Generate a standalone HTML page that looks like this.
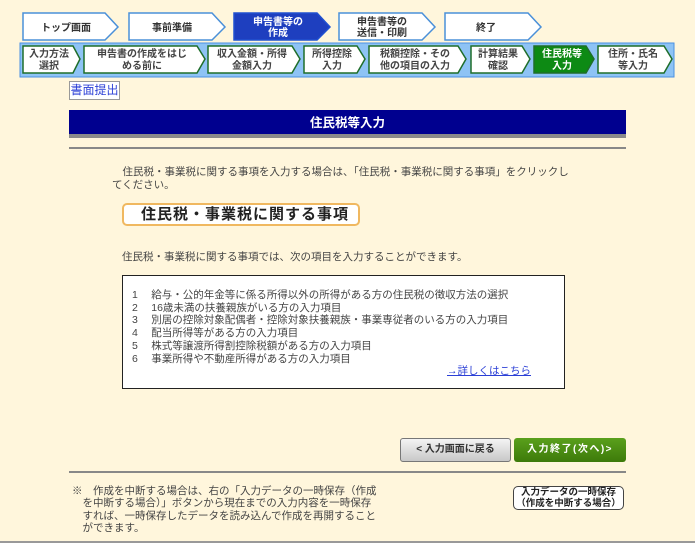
<!DOCTYPE html>
<html><head><meta charset="utf-8"><style>
*{margin:0;padding:0;box-sizing:border-box}
body{width:695px;height:543px;background:#fff6dc;font-family:"Liberation Sans","Noto Sans CJK JP",sans-serif;position:relative;overflow:hidden;color:#333}
.a{position:absolute}
svg text{font-family:"Liberation Sans","Noto Sans CJK JP",sans-serif}
.t{font-size:10.5px;color:#444;line-height:12.5px;white-space:nowrap}
</style></head><body>
<svg class="a" style="left:0;top:0" width="695" height="80">
<g stroke="#4a90d9" stroke-width="1.5" fill="#fff">
<polygon points="23,13 105,13 118,27 105,40 23,40"/>
<polygon points="129,13 212,13 225,27 212,40 129,40"/>
<polygon points="234,13 317,13 330,27 317,40 234,40" fill="#1e3fbf" stroke="#2050d0"/>
<polygon points="339,13 422,13 435,27 422,40 339,40"/>
<polygon points="445,13 528,13 541,27 528,40 445,40"/>
</g>
<g font-size="10" font-weight="bold" text-anchor="middle" fill="#333">
<text x="66" y="31">トップ画面</text>
<text x="172" y="31">事前準備</text>
<text x="278" y="25" fill="#fff">申告書等の</text><text x="278" y="36" fill="#fff">作成</text>
<text x="382" y="25">申告書等の</text><text x="382" y="36">送信・印刷</text>
<text x="486" y="31">終了</text>
</g>
<rect x="20" y="43" width="654" height="34" fill="#8ec3f5" stroke="#4a90e2"/>
<g stroke="#1f6e2a" stroke-width="1.5" fill="#fff">
<polygon points="23,46 73,46 80,59 73,73 23,73"/>
<polygon points="84,46 197,46 205,59 197,73 84,73"/>
<polygon points="208,46 292,46 300,59 292,73 208,73"/>
<polygon points="304,46 357,46 365,59 357,73 304,73"/>
<polygon points="369,46 458,46 466,59 458,73 369,73"/>
<polygon points="471,46 522,46 530,59 522,73 471,73"/>
<polygon points="534,46 586,46 594,59 586,73 534,73" fill="#0d8a14"/>
<polygon points="598,46 664,46 672,59 664,73 598,73"/>
</g>
<g font-size="10" font-weight="bold" text-anchor="middle" fill="#444">
<text x="49" y="57">入力方法</text><text x="49" y="69">選択</text>
<text x="142" y="57">申告書の作成をはじ</text><text x="142" y="69">める前に</text>
<text x="252" y="57">収入金額・所得</text><text x="252" y="69">金額入力</text>
<text x="332" y="57">所得控除</text><text x="332" y="69">入力</text>
<text x="415" y="57">税額控除・その</text><text x="415" y="69">他の項目の入力</text>
<text x="498" y="57">計算結果</text><text x="498" y="69">確認</text>
<text x="562" y="57" fill="#fff">住民税等</text><text x="562" y="69" fill="#fff">入力</text>
<text x="633" y="57">住所・氏名</text><text x="633" y="69">等入力</text>
</g>
</svg>
<div class="a" style="left:69px;top:81px;width:51px;height:19px;background:#fff;border:1px solid #999;color:#2b3fd6;font-size:12px;line-height:17px;text-align:center">書面提出</div>
<div class="a" style="left:69px;top:110px;width:557px;height:28px;background:#00008f;border-bottom:4px solid #8a8a8a;color:#fff;font-weight:bold;font-size:12.5px;line-height:26px;text-align:center">住民税等入力</div>
<div class="a" style="left:69px;top:147px;width:557px;height:2px;background:#888"></div>
<div class="a t" style="left:112px;top:166px">　住民税・事業税に関する事項を入力する場合は、「住民税・事業税に関する事項」をクリックし<br>てください。</div>
<div class="a" style="left:122px;top:203px;width:238px;height:23px;background:#fff;border:2px solid #f0b860;border-radius:5px;font-size:15px;font-weight:bold;color:#222;line-height:19px;padding-left:17px;letter-spacing:1px">住民税・事業税に関する事項</div>
<div class="a t" style="left:122px;top:251px">住民税・事業税に関する事項では、次の項目を入力することができます。</div>
<div class="a" style="left:122px;top:275px;width:443px;height:114px;background:#fff;border:1px solid #222;padding:13px 0 0 9px">
<div class="t" style="line-height:12.7px">1　 給与・公的年金等に係る所得以外の所得がある方の住民税の徴収方法の選択<br>2　 16歳未満の扶養親族がいる方の入力項目<br>3　 別居の控除対象配偶者・控除対象扶養親族・事業専従者のいる方の入力項目<br>4　 配当所得等がある方の入力項目<br>5　 株式等譲渡所得割控除税額がある方の入力項目<br>6　 事業所得や不動産所得がある方の入力項目</div>
<div style="position:absolute;left:324px;top:87px;font-size:10.5px;color:#2b3fd6;text-decoration:underline">→詳しくはこちら</div>
</div>
<div class="a" style="left:400px;top:438px;width:111px;height:24px;background:linear-gradient(#f4f4f4,#c8c8c8);border:1px solid #777;border-radius:3px;font-size:10px;font-weight:bold;color:#333;line-height:22px;text-align:center">&lt; 入力画面に戻る</div>
<div class="a" style="left:514px;top:438px;width:112px;height:24px;background:linear-gradient(#5aa01c,#3d7a0a);border-radius:3px;font-size:10px;font-weight:bold;color:#fff;line-height:24px;text-align:center;letter-spacing:1.5px">入力終了(次へ)&gt;</div>
<div class="a" style="left:69px;top:471px;width:557px;height:2px;background:#888"></div>
<div class="a" style="left:513px;top:486px;width:111px;height:24px;background:#fff;border:1px solid #444;border-radius:5px;font-size:9.5px;font-weight:bold;color:#222;line-height:10.5px;text-align:center;padding-top:1px">入力データの一時保存<br>（作成を中断する場合）</div>
<div class="a t" style="left:72px;top:485px;line-height:12.3px">※　作成を中断する場合は、右の「入力データの一時保存（作成<br>　を中断する場合）」ボタンから現在までの入力内容を一時保存<br>　すれば、一時保存したデータを読み込んで作成を再開すること<br>　ができます。</div>
<div class="a" style="left:0;top:541px;width:695px;height:2px;background:#999"></div>
</body></html>
